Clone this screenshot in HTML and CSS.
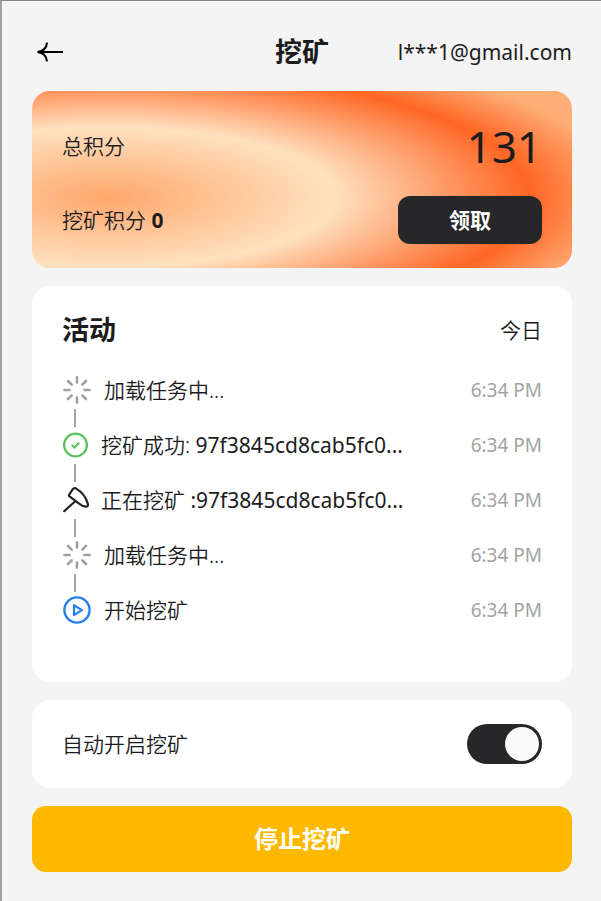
FILE: index.html
```html
<!DOCTYPE html>
<html lang="zh-CN">
<head>
  <meta charset="UTF-8">
  <meta name="viewport" content="width=device-width,initial-scale=1.0">
  <title>挖矿</title>
  <link rel="stylesheet" href="styles.css">
</head>
<body>

  <!-- shared icon for the two loading rows -->
  <svg width="0" height="0" class="sprite" aria-hidden="true">
    <symbol id="spinner" viewBox="0 0 28 28">
      <path d="M14 1.4v5M14 21.6v5M1.4 14h5.2M21.4 14h5.2M5 5l3.7 3.7M19.3 19.3l3.7 3.7M5 23l3.7-3.7M19.3 8.7l3.7-3.7" fill="none" stroke="#a0a0a0" stroke-width="2.6" stroke-linecap="round"/>
    </symbol>
  </svg>

  <main class="app">
    <header class="header">
      <button class="back" aria-label="返回">
        <svg width="28" height="22" viewBox="0 0 28 22"><path d="M1.5 11H27M11 1.6C10.6 6.5 8 10.2 1.5 11C8 11.8 10.6 15.5 11 20.4" fill="none" stroke="#000" stroke-width="2.1"/></svg>
      </button>
      <h1>挖矿</h1>
      <span class="account">l***1@gmail.com</span>
    </header>

    <section class="card points">
      <div class="row total">
        <span>总积分</span>
        <span class="total-num">131</span>
      </div>
      <div class="row">
        <span>挖矿积分 <b>0</b></span>
        <button class="claim">领取</button>
      </div>
    </section>

    <section class="card activity">
      <div class="row">
        <h2>活动</h2>
        <span>今日</span>
      </div>
      <ul class="timeline">
        <li>
          <svg width="30" height="28" viewBox="0 0 30 28"><use href="#spinner" x="1" width="28" height="28"/></svg>
          <span class="msg">加载任务中...</span>
          <time>6:34 PM</time>
        </li>
        <li>
          <svg width="27" height="28" viewBox="0 0 27 28"><circle cx="13.5" cy="14" r="11.4" fill="none" stroke="#5bbf5b" stroke-width="2.2"/><path d="M9.8 14l2.6 2.5 4.8-4.8" fill="none" stroke="#5bbf5b" stroke-width="2"/></svg>
          <span class="msg">挖矿成功: <span class="hash">97f3845cd8cab5fc0...</span></span>
          <time>6:34 PM</time>
        </li>
        <li>
          <svg width="27" height="28" viewBox="0 0 27 28"><path d="M7.2 8.6L10.6 3.4Q11.9 1.6 14.2 2.6C19 5.4 24 11.5 25.8 17.6Q26.6 20.9 23.5 20.6Q20 20.2 17.4 17.8L7.6 10.4Q6.6 9.6 7.2 8.6ZM13.2 15.2L2.2 25.2" fill="none" stroke="#222" stroke-width="2.2" stroke-linecap="round" stroke-linejoin="round"/></svg>
          <span class="msg">正在挖矿 <span class="hash">:97f3845cd8cab5fc0...</span></span>
          <time>6:34 PM</time>
        </li>
        <li>
          <svg width="30" height="28" viewBox="0 0 30 28"><use href="#spinner" x="1" width="28" height="28"/></svg>
          <span class="msg">加载任务中...</span>
          <time>6:34 PM</time>
        </li>
        <li>
          <svg width="30" height="28" viewBox="0 0 30 28"><circle cx="15" cy="14" r="12.6" fill="none" stroke="#2680eb" stroke-width="2.4"/><path d="M12 9.2v9.8l8-4.9z" fill="none" stroke="#2680eb" stroke-width="2.2" stroke-linejoin="round"/></svg>
          <span class="msg">开始挖矿</span>
          <time>6:34 PM</time>
        </li>
      </ul>
    </section>

    <section class="card row auto">
      <label for="autoMine">自动开启挖矿</label>
      <input type="checkbox" id="autoMine" class="switch" checked>
    </section>

    <button class="stop">停止挖矿</button>
  </main>

</body>
</html>
```

FILE: styles.css
```css
:root{
  --bg:#f4f4f4;
  --ink:#1c1c1e;
  --dark:#272729;
  --muted:#a3a3a3;
  --yellow:#ffb800;
}
*{box-sizing:border-box;margin:0;padding:0}
body{
  min-height:100vh;
  background:var(--bg);
  border-top:1px solid #858585;
  border-left:2px solid #a0a2a2;
  font-family:"Noto Sans","Noto Sans CJK SC",sans-serif;
  font-size:21px;
  font-weight:350;
  line-height:28px;
  color:var(--ink);
}
button{font:inherit;border:none;cursor:pointer}
b{font-weight:700}
.sprite{position:absolute}
.app{
  display:flex;
  flex-direction:column;
  gap:18px;
  padding:30px 29px 29px 30px;
}
/* header */
.header{
  display:grid;
  grid-template-columns:1fr auto 1fr;
  align-items:center;
  height:42px;
}
.back{
  display:flex;
  justify-self:start;
  padding:0 4px;
  background:none;
}
h1,h2{
  font-size:27px;
  line-height:40px;
  font-weight:700;
}
.account{justify-self:end}
.account,.total-num,.hash,time{font-weight:400}
/* cards */
.card{
  background:#fff;
  border-radius:18px;
  padding:24px 30px;
}
.row{
  display:flex;
  align-items:center;
  justify-content:space-between;
}
.points{
  background:radial-gradient(ellipse 100% 94% at 14% 60%,#ffa76c 0%,#ffe1c0 42%,#ff6624 78%,#ffae78 96%);
}
.total{margin-bottom:19px}
.total-num{
  font-size:44px;
  line-height:62px;
}
.claim{
  width:144px;
  height:48px;
  border-radius:12px;
  background:var(--dark);
  color:#fff;
  font-weight:700;
}
/* activity list */
.activity{padding-bottom:58px}
.timeline{
  list-style:none;
  display:flex;
  flex-direction:column;
  gap:27px;
  margin-top:26px;
}
.timeline li{
  position:relative;
  display:flex;
  align-items:center;
  gap:12px;
  height:28px;
}
.timeline svg{flex:none}
/* connector to the next entry */
.timeline li:not(:last-child)::after{
  content:"";
  position:absolute;
  left:12px;
  top:33px;
  width:2px;
  height:18px;
  background:var(--muted);
}
.msg{
  flex:1;
  white-space:nowrap;
  overflow:hidden;
  text-overflow:ellipsis;
}
time{
  font-size:19px;
  color:var(--muted);
}
/* toggle */
.switch{
  appearance:none;
  width:75px;
  height:40px;
  padding:3px;
  border-radius:20px;
  background:#c4c4c4;
  cursor:pointer;
}
.switch::before{
  content:"";
  display:block;
  width:34px;
  height:34px;
  border-radius:50%;
  background:#fafafa;
}
.switch:checked{background:var(--dark)}
.switch:checked::before{margin-left:auto}
.stop{
  height:66px;
  border-radius:14px;
  background:var(--yellow);
  color:#fff;
  font-size:24px;
  font-weight:700;
}
```
